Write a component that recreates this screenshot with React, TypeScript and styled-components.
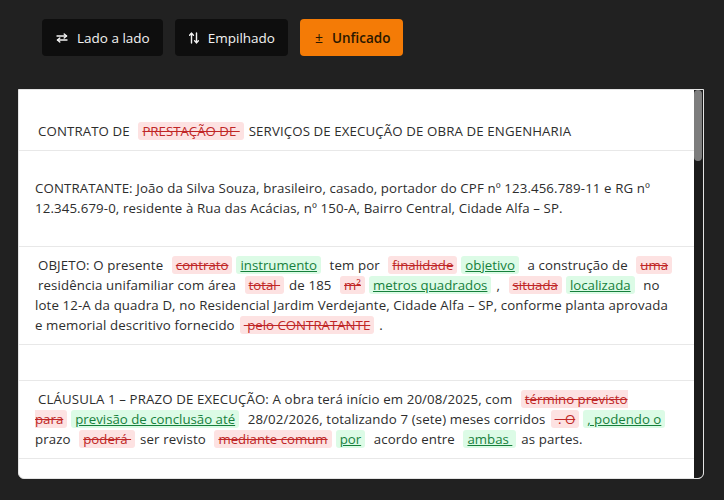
import React, { useLayoutEffect, useRef, useState } from "react";
import styled, { createGlobalStyle } from "styled-components";

const GlobalStyle = createGlobalStyle`
  html, body {
    margin: 0;
    padding: 0;
    background: #212121;
    font-family: "Open Sans", "Noto Sans", sans-serif;
  }
  * { box-sizing: border-box; }
`;

const Page = styled.div`
  display: flex;
  flex-direction: column;
  gap: 33px;
  padding: 19px 20px 0 18px;
`;

const Toolbar = styled.div`
  display: flex;
  gap: 12px;
  padding-left: 24px;
`;

const ModeButton = styled.button<{ $active?: boolean }>`
  display: flex;
  align-items: center;
  gap: 9px;
  height: 37px;
  padding: 0 13px 0 14px;
  border: none;
  border-radius: 4px;
  background: ${(p) => (p.$active ? "#f47b06" : "#0e0e0e")};
  color: ${(p) => (p.$active ? "#2a1700" : "#f3f3f3")};
  font-family: "Open Sans", sans-serif;
  font-size: 13.5px;
  font-weight: ${(p) => (p.$active ? 600 : 500)};
  cursor: pointer;
`;

const PlusMinus = styled.span`
  font-size: 14px;
  font-weight: 500;
  padding-left: 1px;
`;

const Panel = styled.div`
  display: flex;
  height: 390px;
  background: #ffffff;
  border: 1px solid #e4e4e4;
  border-radius: 0 0 6px 6px;
  overflow: hidden;
`;

const Scroller = styled.div`
  flex: 1;
  min-width: 0;
  overflow-y: auto;
  scrollbar-width: none;
  &::-webkit-scrollbar {
    display: none;
  }
`;

const Track = styled.div`
  width: 9px;
  flex-shrink: 0;
  background: #1b1b1b;
  display: flex;
  flex-direction: column;
`;

const Thumb = styled.div`
  width: 8px;
  background: #7d7d7d;
  border-radius: 4px;
`;

const Row = styled.div<{ $pt: number; $pb: number }>`
  padding: ${(p) => p.$pt}px 20px ${(p) => p.$pb}px 16px;
  border-bottom: 1px solid #e8e8e8;
  min-height: ${(p) => p.$pt + p.$pb + 20}px;
  font-size: 13.25px;
  line-height: 20px;
  color: #2d2d2d;
`;

const PlainText = styled.span`
  letter-spacing: 0.12px;
`;

const Same = styled.span`
  margin: 0 1px;
  padding: 0 2px;
  letter-spacing: 0.12px;
`;

const Del = styled.del`
  margin: 0 2px;
  padding: 0 4px;
  border-radius: 3px;
  background: #fde2e2;
  color: #c02626;
  text-decoration: line-through;
`;

const Ins = styled.ins`
  margin: 0 2px;
  padding: 0 4px;
  border-radius: 3px;
  background: #dcfbe6;
  color: #16803c;
  text-decoration: underline;
`;

type Tok = ["p" | "d" | "i", string];
type RowData =
  | { kind: "diff"; toks: Tok[]; pt?: number; pb?: number }
  | { kind: "plain"; text: string }
  | { kind: "empty" };

const rows: RowData[] = [
  {
    kind: "diff",
    pt: 31,
    pb: 9,
    toks: [
      ["p", "CONTRATO DE "],
      ["d", "PRESTAÇÃO DE "],
      ["p", "SERVIÇOS DE EXECUÇÃO DE OBRA DE ENGENHARIA"],
    ],
  },
  {
    kind: "plain",
    text:
      "CONTRATANTE: João da Silva Souza, brasileiro, casado, portador do CPF nº 123.456.789-11 e RG nº 12.345.679-0, residente à Rua das Acácias, nº 150-A, Bairro Central, Cidade Alfa – SP.",
  },
  {
    kind: "diff",
    toks: [
      ["p", "OBJETO: O presente "],
      ["d", "contrato"],
      ["i", "instrumento"],
      ["p", " tem por "],
      ["d", "finalidade"],
      ["i", "objetivo"],
      ["p", " a construção de "],
      ["d", "uma "],
      ["p", "residência unifamiliar com área "],
      ["d", "total "],
      ["p", "de 185 "],
      ["d", "m²"],
      ["i", "metros quadrados"],
      ["p", ", "],
      ["d", "situada"],
      ["i", "localizada"],
      [
        "p",
        " no lote 12-A da quadra D, no Residencial Jardim Verdejante, Cidade Alfa – SP, conforme planta aprovada e memorial descritivo fornecido",
      ],
      ["d", " pelo CONTRATANTE"],
      ["p", "."],
    ],
  },
  { kind: "empty" },
  {
    kind: "diff",
    toks: [
      ["p", "CLÁUSULA 1 – PRAZO DE EXECUÇÃO: A obra terá início em 20/08/2025, com "],
      ["d", "término previsto para"],
      ["i", "previsão de conclusão até"],
      ["p", " 28/02/2026, totalizando 7 (sete) meses corridos"],
      ["d", " . O"],
      ["i", ", podendo o"],
      ["p", " prazo "],
      ["d", "poderá "],
      ["p", "ser revisto "],
      ["d", "mediante comum"],
      ["i", "por"],
      ["p", " acordo entre "],
      ["i", "ambas "],
      ["p", "as partes."],
    ],
  },
  {
    kind: "plain",
    text:
      "CLÁUSULA 2 – DO PREÇO: Pela execução integral dos serviços descritos neste contrato, o CONTRATANTE pagará à CONTRATADA o valor global de R$ 420.000,00 (quatrocentos e vinte mil reais), já incluídos materiais, mão de obra, encargos sociais e tributos.",
  },
  {
    kind: "diff",
    toks: [
      ["p", "PARÁGRAFO ÚNICO: O pagamento será realizado em "],
      ["d", "seis"],
      ["i", "sete"],
      ["p", " parcelas mensais, mediante apresentação de medição aprovada pela fiscalização e emissão da respectiva nota fiscal, "],
      ["d", "no prazo de"],
      ["i", "em até"],
      ["p", " 10 (dez) dias úteis."],
    ],
  },
  { kind: "empty" },
  {
    kind: "plain",
    text:
      "CLÁUSULA 3 – DAS OBRIGAÇÕES DA CONTRATADA: Executar os serviços em conformidade com o projeto aprovado, as normas técnicas da ABNT e a legislação municipal vigente, responsabilizando-se pela segurança do canteiro de obras e de seus empregados.",
  },
  {
    kind: "diff",
    toks: [
      ["p", "A CONTRATADA deverá manter no local da obra "],
      ["d", "o"],
      ["i", "um"],
      ["p", " diário de obras atualizado, no qual serão registradas as ocorrências relevantes, "],
      ["d", "bem como"],
      ["i", "incluindo"],
      ["p", " as condições climáticas e o efetivo de trabalhadores presentes."],
    ],
  },
  {
    kind: "plain",
    text:
      "CLÁUSULA 4 – DAS OBRIGAÇÕES DO CONTRATANTE: Efetuar os pagamentos nas datas ajustadas, fornecer o acesso ao terreno e disponibilizar as licenças e alvarás necessários ao início da obra.",
  },
  {
    kind: "diff",
    toks: [
      ["p", "CLÁUSULA 5 – DA GARANTIA: A CONTRATADA garante a solidez e a segurança da obra pelo prazo de "],
      ["d", "5 (cinco)"],
      ["i", "cinco (5)"],
      ["p", " anos, contados da data de entrega, nos termos do art. 618 do Código Civil."],
    ],
  },
  { kind: "empty" },
  {
    kind: "plain",
    text:
      "CLÁUSULA 6 – DAS PENALIDADES: O atraso injustificado na entrega da obra sujeitará a CONTRATADA à multa de 0,5% (meio por cento) por dia de atraso, limitada a 10% (dez por cento) do valor total do contrato.",
  },
  {
    kind: "diff",
    toks: [
      ["p", "CLÁUSULA 7 – DA RESCISÃO: O presente contrato poderá ser rescindido "],
      ["d", "por qualquer das partes"],
      ["i", "pelas partes"],
      ["p", " em caso de descumprimento de suas cláusulas, mediante notificação prévia de "],
      ["d", "15"],
      ["i", "30"],
      ["p", " dias."],
    ],
  },
  {
    kind: "plain",
    text:
      "CLÁUSULA 8 – DO SEGURO: A CONTRATADA manterá, durante toda a execução da obra, apólice de seguro de responsabilidade civil e de riscos de engenharia, com cobertura compatível com o valor do contrato, apresentando cópia ao CONTRATANTE sempre que solicitado.",
  },
  {
    kind: "diff",
    toks: [
      ["p", "CLÁUSULA 9 – DAS ALTERAÇÕES DE PROJETO: Quaisquer modificações no projeto "],
      ["d", "deverão ser"],
      ["i", "serão"],
      ["p", " formalizadas por termo aditivo, com indicação dos novos custos e prazos, "],
      ["d", "após"],
      ["i", "mediante"],
      ["p", " aprovação expressa do CONTRATANTE."],
    ],
  },
  { kind: "empty" },
  {
    kind: "plain",
    text:
      "CLÁUSULA 10 – DA FISCALIZAÇÃO: O CONTRATANTE poderá, a qualquer tempo, fiscalizar a execução dos serviços diretamente ou por meio de profissional habilitado por ele indicado, sem que isso reduza a responsabilidade técnica da CONTRATADA.",
  },
  {
    kind: "diff",
    toks: [
      ["p", "CLÁUSULA 11 – DO RECEBIMENTO DA OBRA: Concluídos os serviços, a obra será recebida "],
      ["d", "provisoriamente"],
      ["i", "em caráter provisório"],
      ["p", " no prazo de 15 (quinze) dias e, "],
      ["d", "definitivamente"],
      ["i", "em caráter definitivo"],
      ["p", ", após a vistoria final."],
    ],
  },
  {
    kind: "plain",
    text:
      "CLÁUSULA 12 – DO FORO: Fica eleito o foro da Comarca de Cidade Alfa – SP para dirimir quaisquer dúvidas oriundas deste contrato, com renúncia expressa a qualquer outro, por mais privilegiado que seja.",
  },
  {
    kind: "diff",
    toks: [
      ["p", "E, por estarem assim justas e contratadas, as partes assinam o presente instrumento em "],
      ["d", "duas"],
      ["i", "três"],
      ["p", " vias de igual teor e forma, na presença de duas testemunhas."],
    ],
  },
  { kind: "empty" },
  { kind: "plain", text: "Cidade Alfa – SP, 15 de agosto de 2025." },
  { kind: "plain", text: "João da Silva Souza – CONTRATANTE" },
  { kind: "plain", text: "Construtora Horizonte Ltda. – CONTRATADA" },
  {
    kind: "plain",
    text:
      "Testemunhas: Maria Aparecida Lima – CPF nº 234.567.890-12; Carlos Eduardo Pereira – CPF nº 345.678.901-23.",
  },
];

function SwapIcon() {
  return (
    <svg width="12" height="10" viewBox="0 0 12 10" fill="none" stroke="currentColor" strokeWidth="1.4" strokeLinecap="round" strokeLinejoin="round">
      <path d="M1 3h9.5" />
      <path d="M8.2 0.9 10.5 3 8.2 5.1" />
      <path d="M11 7H1.5" />
      <path d="M3.8 4.9 1.5 7 3.8 9.1" />
    </svg>
  );
}

function StackIcon() {
  return (
    <svg width="10" height="12" viewBox="0 0 10 12" fill="none" stroke="currentColor" strokeWidth="1.4" strokeLinecap="round" strokeLinejoin="round">
      <path d="M2.5 11V1.2" />
      <path d="M0.6 3.2 2.5 1.2 4.4 3.2" />
      <path d="M7.5 1v9.8" />
      <path d="M5.6 8.8 7.5 10.8 9.4 8.8" />
    </svg>
  );
}

function DiffRow({ row }: { row: RowData }) {
  if (row.kind === "empty") return <Row $pt={8} $pb={8} />;
  if (row.kind === "plain")
    return (
      <Row $pt={27} $pb={28}>
        <PlainText>{row.text}</PlainText>
      </Row>
    );
  return (
    <Row $pt={row.pt ?? 8} $pb={row.pb ?? 9}>
      {row.toks.map(([k, s], i) =>
        k === "d" ? <Del key={i}>{s}</Del> : k === "i" ? <Ins key={i}>{s}</Ins> : <Same key={i}>{s}</Same>
      )}
    </Row>
  );
}

function DiffPanel() {
  const ref = useRef<HTMLDivElement>(null);
  const [thumb, setThumb] = useState({ top: 0, height: 63 });

  const update = () => {
    const el = ref.current;
    if (!el) return;
    const track = el.clientHeight;
    const ratio = el.clientHeight / el.scrollHeight;
    const height = Math.max(24, Math.round(track * ratio));
    const top =
      el.scrollHeight > el.clientHeight
        ? Math.round((el.scrollTop / (el.scrollHeight - el.clientHeight)) * (track - height))
        : 0;
    setThumb({ top, height });
  };

  useLayoutEffect(update, []);

  return (
    <Panel>
      <Scroller ref={ref} onScroll={update}>
        {rows.map((r, i) => (
          <DiffRow key={i} row={r} />
        ))}
      </Scroller>
      <Track>
        <Thumb style={{ marginTop: thumb.top, height: thumb.height }} />
      </Track>
    </Panel>
  );
}

export default function App() {
  return (
    <>
      <GlobalStyle />
      <Page>
        <Toolbar>
          <ModeButton>
            <SwapIcon />
            Lado a lado
          </ModeButton>
          <ModeButton>
            <StackIcon />
            Empilhado
          </ModeButton>
          <ModeButton $active>
            <PlusMinus>±</PlusMinus>
            Unficado
          </ModeButton>
        </Toolbar>
        <DiffPanel />
      </Page>
    </>
  );
}
